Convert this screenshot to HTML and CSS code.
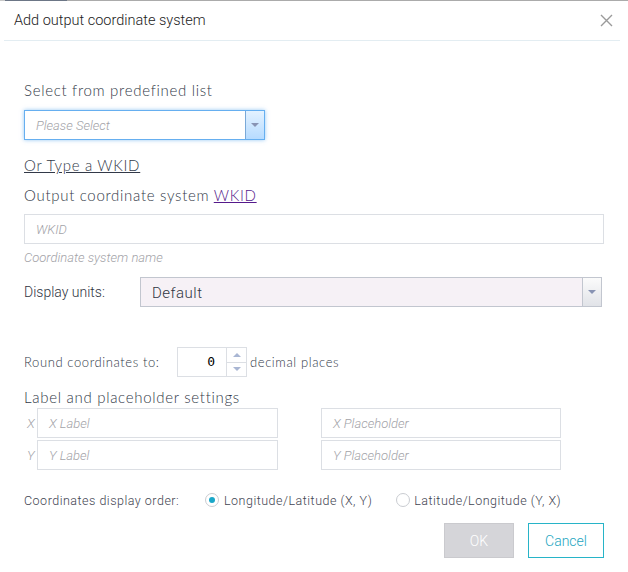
FILE: index.html
```html
<!DOCTYPE html>
<html>
<head>
<meta charset="utf-8">
<link rel="stylesheet" href="styles.css">
</head>
<body>
<div class="topline"></div>
<div class="dialog">
  <div class="header">
    <div class="title">Add output coordinate system</div>
    <div class="close" aria-label="close">
      <svg width="13" height="13" viewBox="0 0 13 13"><path d="M1 1L12 12M12 1L1 12" stroke="#9a9a9a" stroke-width="1.4" fill="none"/></svg>
    </div>
  </div>
  <div class="content">
    <div class="section-label l-select">Select from predefined list</div>
    <div class="select focus">
      <div class="select-text ph">Please Select</div>
      <div class="select-arrow blue"><span class="tri"></span></div>
    </div>
    <div class="section-label l-or"><span class="u">Or Type a WKID</span></div>
    <div class="section-label l-out">Output coordinate system <a class="wkid">WKID</a></div>
    <div class="input wide"><span class="ph">WKID</span></div>
    <div class="hint">Coordinate system name</div>
    <div class="units-row">
      <div class="units-label">Display units:</div>
      <div class="select units">
        <div class="select-text">Default</div>
        <div class="select-arrow gray"><span class="tri"></span></div>
      </div>
    </div>
    <div class="round-row">
      <div class="round-label">Round coordinates to:</div>
      <div class="spin">
        <div class="spin-value">0</div>
        <div class="spin-btns">
          <div class="spin-btn"><span class="tri-up"></span></div>
          <div class="spin-btn"><span class="tri"></span></div>
        </div>
      </div>
      <div class="round-label after">decimal places</div>
    </div>
    <div class="section-label l-lp">Label and placeholder settings</div>
    <div class="lp-row first">
      <div class="axis">X</div>
      <div class="input lp"><span class="ph">X Label</span></div>
      <div class="input lp second"><span class="ph">X Placeholder</span></div>
    </div>
    <div class="lp-row">
      <div class="axis">Y</div>
      <div class="input lp"><span class="ph">Y Label</span></div>
      <div class="input lp second"><span class="ph">Y Placeholder</span></div>
    </div>
    <div class="order-row">
      <div class="order-label">Coordinates display order:</div>
      <div class="radio checked"><span class="dot"></span></div>
      <div class="radio-label">Longitude/Latitude (X, Y)</div>
      <div class="radio second"></div>
      <div class="radio-label">Latitude/Longitude (Y, X)</div>
    </div>
    <div class="buttons">
      <div class="btn ok">OK</div>
      <div class="btn cancel">Cancel</div>
    </div>
  </div>
</div>
</body>
</html>
```
FILE: styles.css
```css
html, body {
  margin: 0;
  padding: 0;
  background: #fff;
}
body {
  width: 628px;
  height: 572px;
  overflow: hidden;
  font-family: Lato, "Open Sans", sans-serif;
  color: #4d5566;
}
.topline {
  height: 1px;
  background: linear-gradient(to right, #c8c8c8 0, #c8c8c8 5px, #6c7686 5px, #6c7686 67px, #ababab 67px);
}
.header {
  margin: 0 8px 0 4px;
  height: 39px;
  border-bottom: 1px solid #e3edf2;
  display: flex;
  align-items: center;
  justify-content: space-between;
}
.title {
  font-family: Roboto, sans-serif;
  font-size: 14.5px;
  font-weight: 300;
  color: #222;
  padding-left: 10px;
  padding-bottom: 1px;
}
.close {
  width: 13px;
  height: 13px;
  margin-right: 7px;
  display: flex;
}
.content {
  padding-left: 24px;
  padding-right: 24px;
}
.section-label {
  font-size: 15px;
  font-weight: 300;
  line-height: 20px;
  color: #323948;
  letter-spacing: 0.7px;
}
.l-select { margin-top: 39px; }
.l-or { margin-top: 15px; }
.l-out { margin-top: 10px; }
.l-lp { margin-top: 10px; }
.u { text-decoration: underline; }
.wkid {
  color: #551a8b;
  text-decoration: underline;
}
.select {
  display: flex;
  height: 30px;
  box-sizing: border-box;
  border: 1px solid #c2c6cf;
  margin-top: 10px;
}
.select.focus {
  width: 241px;
  border-color: #66aff0;
  box-shadow: 0 0 4px rgba(102, 175, 240, 0.7);
}
.select-text {
  flex: 1;
  font-family: Roboto, sans-serif;
  font-size: 14px;
  line-height: 30px;
  padding-left: 11px;
}
.ph {
  font-family: Roboto, sans-serif;
  font-style: italic;
  font-weight: 300;
  font-size: 13px;
  color: #a3a3a8;
}
.select-arrow {
  width: 18px;
  display: flex;
  align-items: center;
  justify-content: center;
}
.select-arrow.blue {
  border-left: 1px solid #7aa9d8;
  background: linear-gradient(#e4f2ff, #b6dbff);
}
.select-arrow.gray {
  border-left: 1px solid #c2c6cf;
  background: linear-gradient(#fbfbfb, #e1e3e8);
}
.tri {
  width: 0;
  height: 0;
  border-left: 4px solid transparent;
  border-right: 4px solid transparent;
  border-top: 4px solid #8893b3;
}
.tri-up {
  width: 0;
  height: 0;
  border-left: 4px solid transparent;
  border-right: 4px solid transparent;
  border-bottom: 4px solid #a9b6d3;
}
.spin-btn .tri { border-top-color: #a9b6d3; }
.input {
  height: 30px;
  box-sizing: border-box;
  border: 1px solid #dcdfe4;
  display: flex;
  align-items: center;
  padding-left: 11px;
}
.input.wide {
  margin-top: 9px;
  width: 580px;
}
.hint {
  margin-top: 6px;
  font-family: Roboto, sans-serif;
  font-style: italic;
  font-weight: 300;
  font-size: 13px;
  line-height: 16px;
  color: #a3a3a8;
}
.units-row {
  margin-top: 11px;
  display: flex;
  align-items: center;
}
.units-label {
  width: 116px;
  font-family: Roboto, sans-serif;
  font-weight: 300;
  font-size: 14px;
  color: #2f3542;
}
.select.units {
  margin-top: 0;
  width: 462px;
  background: #f6f1f6;
}
.select.units .select-text {
  font-size: 15px;
  font-weight: 300;
  letter-spacing: 0.5px;
  color: #2f3542;
  padding-left: 11px;
}
.round-row {
  margin-top: 40px;
  display: flex;
  align-items: center;
}
.round-label {
  font-size: 13px;
  font-weight: 300;
  color: #323948;
  width: 153px;
  letter-spacing: 0.6px;
}
.round-label.after {
  width: auto;
  padding-left: 3px;
}
.spin {
  display: flex;
  height: 30px;
  width: 70px;
  box-sizing: border-box;
  border: 1px solid #dcdfe4;
}
.spin-value {
  flex: 1;
  text-align: right;
  font-family: "DejaVu Sans Mono", monospace;
  font-size: 13px;
  line-height: 28px;
  color: #000;
  padding-right: 11px;
}
.spin-btns {
  width: 19px;
  border-left: 1px solid #dcdfe4;
  display: flex;
  flex-direction: column;
}
.spin-btn {
  flex: 1;
  display: flex;
  align-items: center;
  justify-content: center;
}
.spin-btn + .spin-btn { border-top: 1px solid #dcdfe4; }
.lp-row {
  margin-top: 2px;
  display: flex;
  align-items: center;
}
.lp-row.first { margin-top: 1px; }
.axis {
  width: 10px;
  padding-left: 3px;
  font-family: Roboto, sans-serif;
  font-style: italic;
  font-weight: 300;
  font-size: 13px;
  color: #a3a3a8;
}
.input.lp {
  width: 241px;
  padding-left: 11px;
}
.input.lp.second {
  width: 240px;
  margin-left: 43px;
}
.order-row {
  margin-top: 20px;
  height: 20px;
  display: flex;
  align-items: center;
  font-family: Roboto, sans-serif;
  font-weight: 300;
  font-size: 12.5px;
  letter-spacing: 0.5px;
  color: #3f4552;
}
.order-label { width: 181px; }
.radio {
  width: 14px;
  height: 14px;
  box-sizing: border-box;
  border: 1px solid #c9ccd1;
  border-radius: 50%;
  display: flex;
  align-items: center;
  justify-content: center;
  margin-right: 5px;
}
.radio .dot {
  width: 6px;
  height: 6px;
  border-radius: 50%;
  background: #1aa7c8;
}
.radio.second { margin-left: 24px; margin-right: 4px; }
.buttons {
  margin-top: 13px;
  display: flex;
  justify-content: flex-end;
  gap: 14px;
}
.btn {
  height: 35px;
  box-sizing: border-box;
  display: flex;
  align-items: center;
  justify-content: center;
  font-family: Roboto, sans-serif;
  font-weight: 300;
  font-size: 14px;
}
.btn.ok {
  width: 70px;
  background: #d5d5d9;
  border: 1px solid #cacace;
  color: #fff;
}
.btn.cancel {
  width: 76px;
  border: 1px solid #27b4c8;
  color: #1ea6bf;
}
```
